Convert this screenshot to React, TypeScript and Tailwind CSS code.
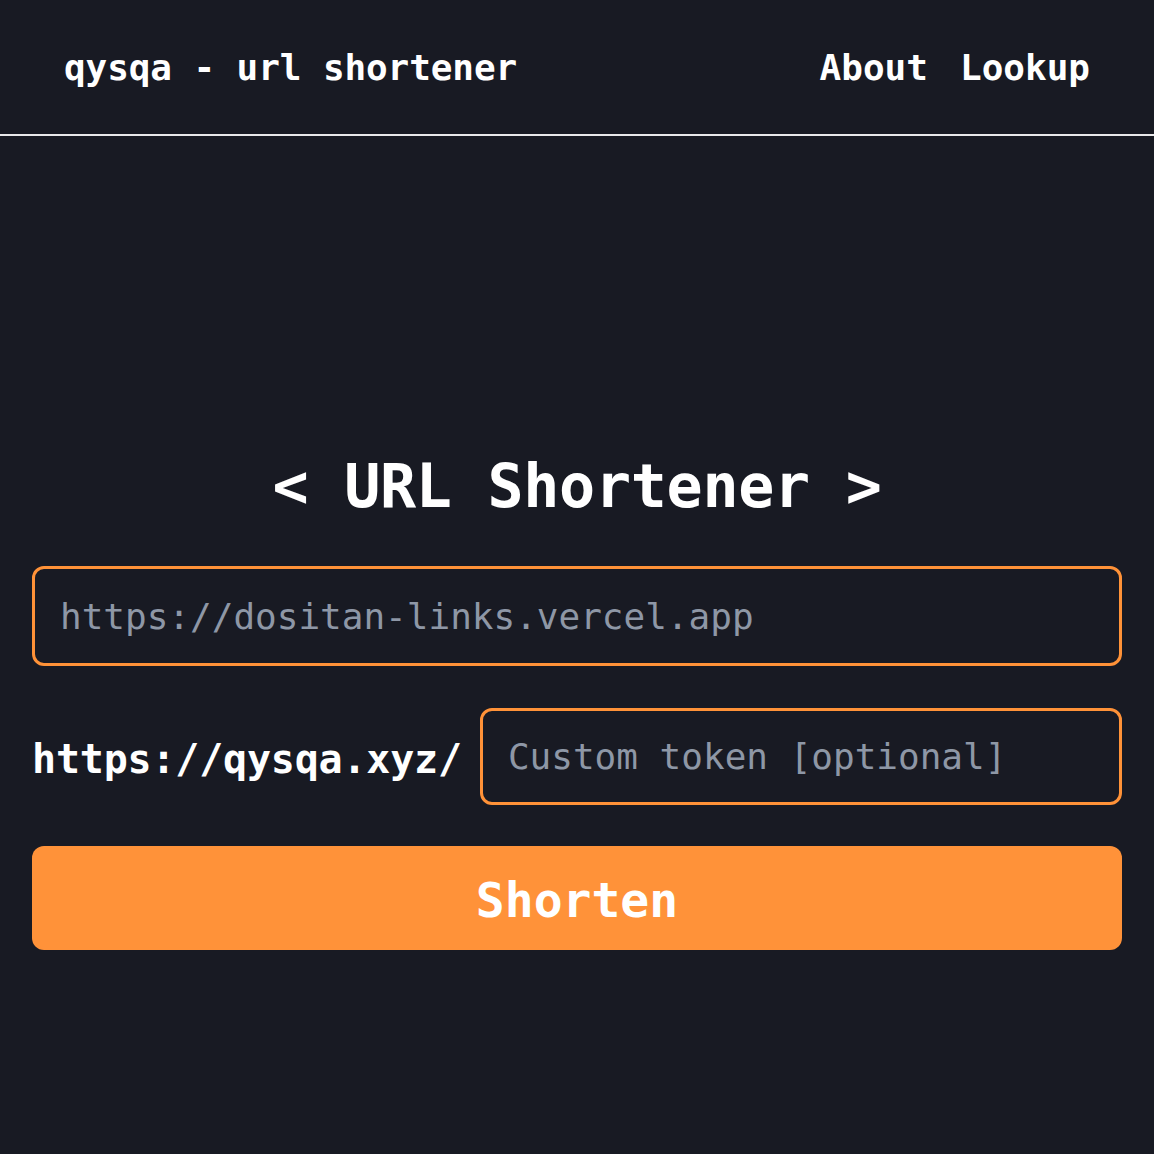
import React, { useState } from "react";

const mono = { fontFamily: '"DejaVu Sans Mono", "Liberation Mono", monospace' };

const App = () => {
  const [url, setUrl] = useState("");
  const [token, setToken] = useState("");

  return (
    <div className="min-h-[1154px] w-full bg-[#181a23] text-white" style={mono}>
      <header className="flex h-[136px] items-center justify-between border-b-2 border-[#e8e8ea] px-16">
        <a className="pt-0.5 text-[36px] font-bold tracking-[-0.1px]">qysqa - url shortener</a>
        <nav className="flex gap-8 pt-0.5 text-[36px] font-bold">
          <a>About</a>
          <a>Lookup</a>
        </nav>
      </header>

      <main className="flex flex-col px-8 pt-[314px]">
        <h1 className="text-center text-[60px] font-bold leading-[72px] tracking-[-0.3px]">
          &lt; URL Shortener &gt;
        </h1>

        <input
          type="text"
          value={url}
          onChange={(e) => setUrl(e.target.value)}
          placeholder="https://dositan-links.vercel.app"
          className="mt-[44px] h-[100px] w-full rounded-xl border-[3px] border-[#ff9238] bg-transparent px-[25px] text-[36px] text-white outline-none placeholder:text-[#8e97a6]"
          style={mono}
        />

        <div className="mt-[42px] flex items-center gap-[18px]">
          <span className="pt-1 text-[40px] font-bold tracking-[-0.2px]">https://qysqa.xyz/</span>
          <input
            type="text"
            value={token}
            onChange={(e) => setToken(e.target.value)}
            placeholder="Custom token [optional]"
            className="h-[97px] min-w-0 flex-1 rounded-xl border-[3px] border-[#ff9238] bg-transparent px-[25px] text-[36px] text-white outline-none placeholder:text-[#8e97a6]"
            style={mono}
          />
        </div>

        <button className="mt-[41px] h-[104px] w-full rounded-xl bg-[#ff9239] pt-1 text-[48px] font-bold text-white">
          Shorten
        </button>
      </main>
    </div>
  );
};

export default App;
